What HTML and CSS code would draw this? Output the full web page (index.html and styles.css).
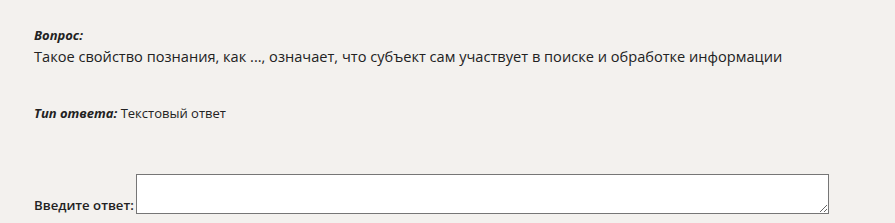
FILE: index.html
```html
<!DOCTYPE html>
<html lang="ru">
<head>
  <meta charset="UTF-8">
  <title>Вопрос</title>
  <link rel="stylesheet" href="styles.css">
</head>
<body>
  <div class="question">
    <div class="label">Вопрос:</div>
    <div class="text">Такое свойство познания, как ..., означает, что субъект сам участвует в поиске и обработке информации</div>
  </div>

  <div class="answer-type">
    <span class="label">Тип ответа:</span> Текстовый ответ
  </div>

  <div class="answer">
    <label for="answer">Введите ответ:</label><textarea id="answer"></textarea>
  </div>
</body>
</html>
```
FILE: styles.css
```css
body {
  margin: 0;
  padding: 26px 34px 0;
  background-color: #f3f1ee;
  color: #222;
  font-family: "Open Sans", "Noto Sans", sans-serif;
}

.label {
  font-style: italic;
  font-weight: bold;
  font-size: 13px;
}

.question .text {
  font-size: 14.6px;
  line-height: 22px;
  margin-top: 1px;
}

.answer-type {
  margin-top: 37px;
  font-size: 13px;
}

.answer {
  margin-top: 52px;
  display: flex;
  align-items: flex-end;
}

.answer label {
  font-size: 13.2px;
  font-weight: 600;
  margin-right: 2px;
}

textarea {
  width: 689px;
  height: 36px;
  border: 1px solid #767676;
  background: #fff;
  padding: 1px;
  margin: 0;
}
```
